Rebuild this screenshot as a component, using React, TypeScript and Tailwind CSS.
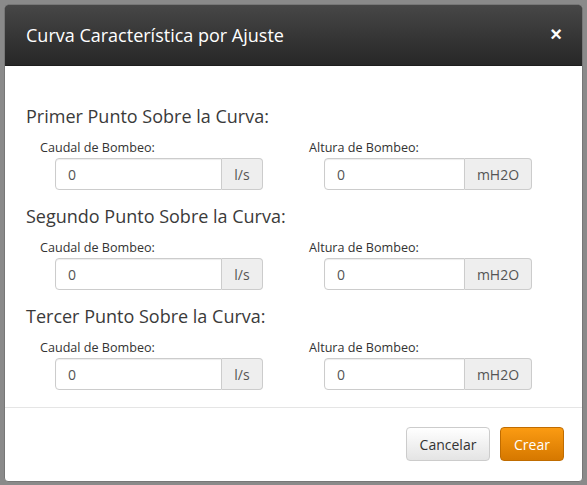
import React from 'react';

const font = { fontFamily: '"Open Sans", "Liberation Sans", sans-serif' };

const Field: React.FC<{ label: string; unit: string; addonW: string }> = ({ label, unit, addonW }) => (
  <div className="flex flex-col">
    <label className="h-4 leading-4 text-[12.6px] text-[#333]">{label}</label>
    <div className="mt-[2px] ml-[15px] flex h-8 w-[208px]">
      <input
        defaultValue="0"
        className="min-w-0 flex-1 rounded-l-[4px] border border-[#ccc] bg-white pl-3 text-[14px] text-[#555] shadow-[inset_0_1px_1px_rgba(0,0,0,0.075)] outline-none"
      />
      <span
        className={`${addonW} flex items-center justify-center rounded-r-[4px] border border-l-0 border-[#ccc] bg-[#eee] text-[14px] text-[#555]`}
      >
        {unit}
      </span>
    </div>
  </div>
);

const Section: React.FC<{ title: string; first?: boolean }> = ({ title, first }) => (
  <div className={first ? '' : 'mt-[15px]'}>
    <h4 className="h-[22px] leading-[22px] text-[18px] text-[#3a3a3a]">{title}</h4>
    <div className="mt-[13px] ml-[14px] grid grid-cols-[269px_269px]">
      <Field label="Caudal de Bombeo:" unit="l/s" addonW="w-[41px]" />
      <Field label="Altura de Bombeo:" unit="mH2O" addonW="w-[67px]" />
    </div>
  </div>
);

export default function App() {
  return (
    <div className="h-[485px] w-[587px] bg-[#8a8a8a] pl-[4px] pt-[4px]" style={font}>
      <div className="flex h-[478px] w-[579px] flex-col overflow-hidden rounded-[4px] border border-[#777] bg-white">
        <div className="flex h-[61px] items-center justify-between border-b border-[#1e1e1e] bg-gradient-to-b from-[#474747] to-[#272727] pl-[21px] pr-[20px]">
          <h3 className="text-[18px] text-white">Curva Característica por Ajuste</h3>
          <button className="mb-[2px] text-[20px] font-bold leading-none text-white" style={{ fontFamily: '"Liberation Sans", sans-serif' }}>
            ×
          </button>
        </div>
        <div className="pl-[21px] pt-[39px] pb-[17px]">
          <Section title="Primer Punto Sobre la Curva:" first />
          <Section title="Segundo Punto Sobre la Curva:" />
          <Section title="Tercer Punto Sobre la Curva:" />
        </div>
        <div className="flex flex-1 items-start justify-end gap-[10px] border-t border-[#e5e5e5] pr-[18px] pt-[19px]">
          <button className="h-[34px] w-[84px] rounded-[4px] border border-[#ccc] bg-gradient-to-b from-white to-[#e4e4e4] text-[14px] text-[#333]">
            Cancelar
          </button>
          <button className="h-[34px] w-[64px] rounded-[4px] border border-[#c06c00] bg-gradient-to-b from-[#fb9b12] to-[#d67800] text-[14px] text-white">
            Crear
          </button>
        </div>
      </div>
    </div>
  );
}
